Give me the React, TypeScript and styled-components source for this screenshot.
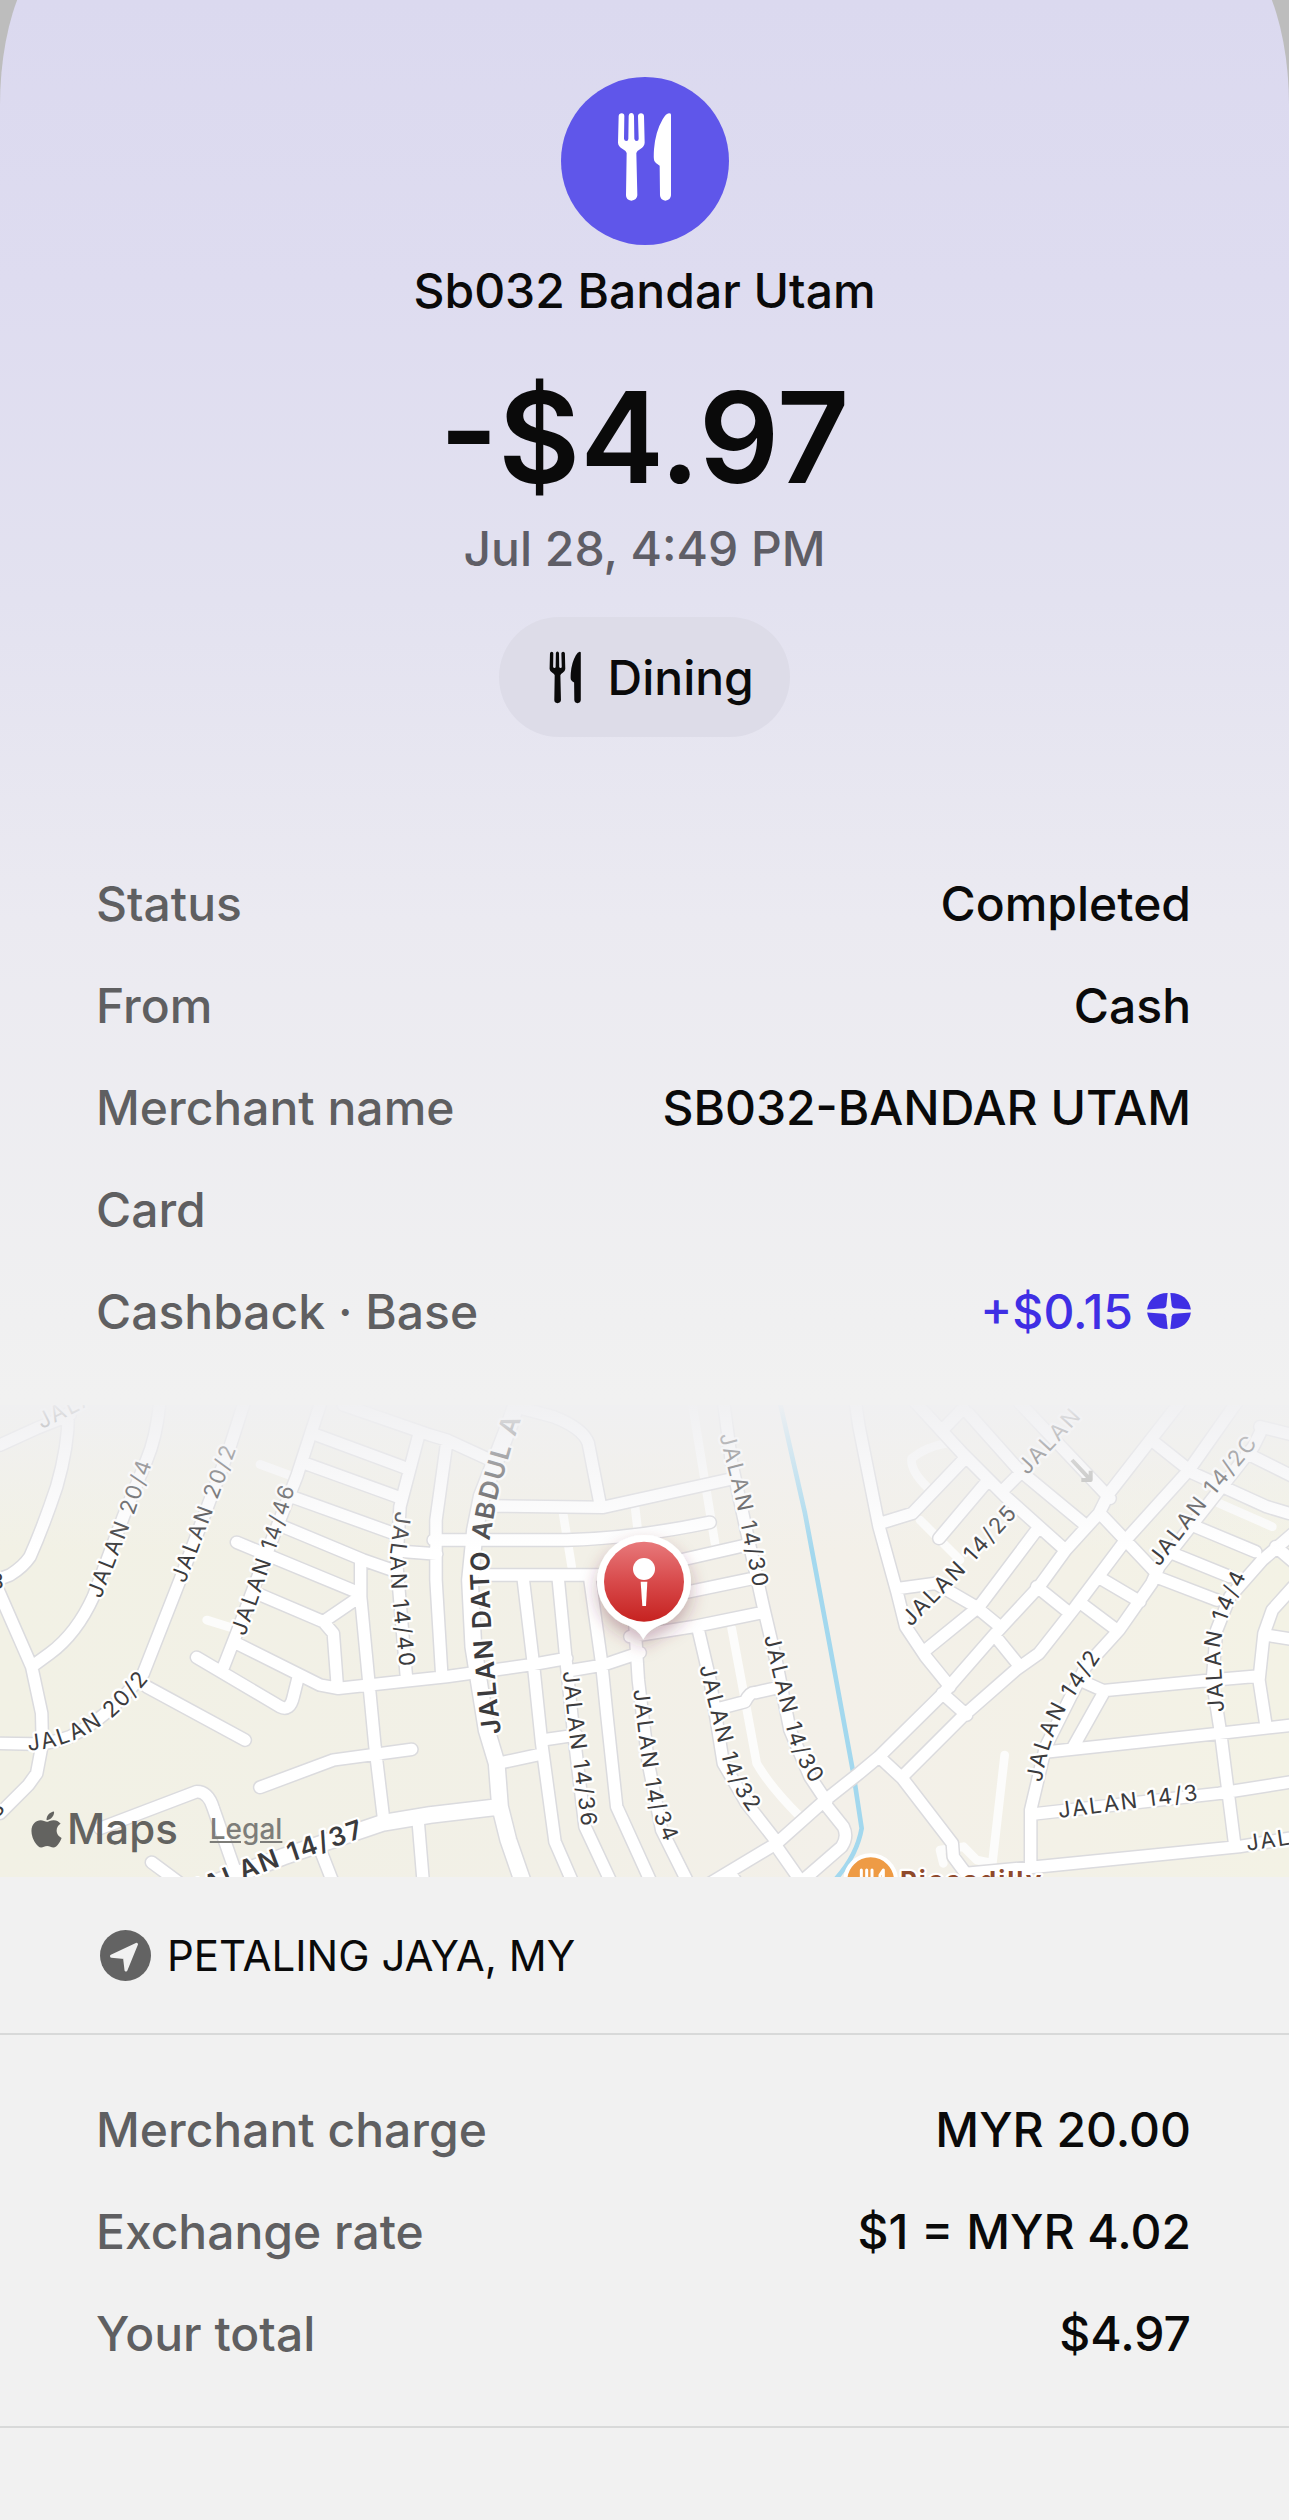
import React from 'react'
import styled, { createGlobalStyle } from 'styled-components'
import { FaApple } from 'react-icons/fa'

const GlobalStyle = createGlobalStyle`
  * {
    box-sizing: border-box;
  }

  body {
    margin: 0;
    background: #bdbdbd;
    font-family: Inter, 'Liberation Sans', sans-serif;
    color: #0a0a0a;
  }
`

const Screen = styled.main`
  background: #bdbdbd;
  overflow: hidden;
`

// the rounded top of the sheet runs off the screen
const Sheet = styled.article`
  min-height: calc(100vh + 60px);
  margin-top: -60px;
  padding-top: 60px;
  border-radius: 75px 75px 0 0 / 165px 165px 0 0;
  background: linear-gradient(180deg, #dbd9ef 60px, #dedcf0 340px, #e3e2f0 660px, #ebeaf1 980px, #f0f0f1 1380px, #f1f1f1 1460px);
`

const Hero = styled.header`
  display: flex;
  flex-direction: column;
  align-items: center;
  padding: 77px 40px 0;
`

const Badge = styled.div`
  display: flex;
  align-items: center;
  justify-content: center;
  width: 168px;
  height: 168px;
  border-radius: 50%;
  background: #5f56ea;
  color: #fff;
  padding-bottom: 8px;
`

const Merchant = styled.h1`
  margin: 16px 0 0;
  font-size: 48px;
  line-height: 60px;
  font-weight: 500;
`

const Amount = styled.p`
  margin: 38px 0 0;
  font-size: 126px;
  line-height: 156px;
  font-weight: 600;
`

const DateText = styled.time`
  margin-top: 4px;
  font-size: 48px;
  line-height: 60px;
  font-weight: 500;
  color: #5f5e66;
`

const CategoryButton = styled.button`
  display: flex;
  align-items: center;
  gap: 26px;
  height: 120px;
  margin-top: 38px;
  padding: 0 36px 0 50px;
  border: 0;
  border-radius: 60px;
  background: #dddce8;
  color: inherit;
  font-family: inherit;
  font-size: 48px;
  font-weight: 500;
`

const Details = styled.dl`
  margin: 0;
  padding: 115px 98px 43px 96px;
`

const Totals = styled(Details)`
  padding: 43px 98px 42px 96px;
  border-top: 2px solid #d8d9d9;
  border-bottom: 2px solid #d8d9d9;
`

const Row = styled.div`
  display: flex;
  align-items: center;
  justify-content: space-between;
  height: 102px;
  font-size: 48px;
  font-weight: 500;
`

const Label = styled.dt`
  color: #5f5f61;
`

const Value = styled.dd<{ $accent?: boolean }>`
  display: flex;
  align-items: center;
  gap: 14px;
  margin: 0;
  color: ${({ $accent }) => ($accent ? '#3f2fe4' : 'inherit')};
`

const MapFrame = styled.section`
  position: relative;
  height: 472px;
  overflow: hidden;
  background: #f2f1e6;
`

const MapSvg = styled.svg`
  display: block;
  width: 100%;
  height: 100%;

  .casing {
    stroke: #dbdbde;
  }

  .road {
    stroke: #fff;
  }

  text {
    font-size: 66px;
    fill: #3b3b3d;
    stroke: #fff;
    stroke-width: 14px;
    stroke-linejoin: round;
    paint-order: stroke;
    letter-spacing: 6px;
  }

  .major {
    font-size: 78px;
    font-weight: 600;
  }

  .place {
    font-size: 78px;
    font-weight: 700;
    fill: #8f4a2c;
  }
`

const MapCredit = styled.div`
  position: absolute;
  left: 26px;
  bottom: 22px;
  display: flex;
  align-items: center;
  color: #636360;
  font-size: 42px;
  line-height: 52px;
  font-weight: 500;
`

const LegalLink = styled.a`
  margin-left: 32px;
  font-size: 28px;
  color: #7d7d79;
`

const Address = styled.address`
  display: flex;
  align-items: center;
  gap: 16px;
  height: 156px;
  padding: 0 98px 0 100px;
  font-style: normal;
  font-size: 42px;
`

const CutleryIcon = ({ height }: { height: number }) => (
  <svg height={height} viewBox="0 0 165 270" fill="currentColor" aria-hidden="true">
    <path d="M5 12Q6 4 14 4Q22 4 22 12L21 80Q22 87 28 87Q34 87 34 80L35 12Q36 3 43 3Q50 3 51 12L52 80Q53 87 59 87Q65 87 65 80L63 12Q64 4 72 4Q80 4 81 12L83 92Q82 104 70 111Q59 117 58 123L61 250Q60 265 43 266Q27 265 27 250L29 123Q28 117 17 111Q4 104 3 92Z" />
    <path d="M162 8Q162 4 156 4Q147 4 137 22Q115 60 111 112Q109 140 112 147Q116 155 128 161L129 250Q130 265 145 266Q161 265 162 250Z" />
  </svg>
)

const CoinIcon = () => (
  <svg width="44" height="36" viewBox="0 0 130 107" fill="currentColor" aria-hidden="true">
    <path id="coin-quarter" d="M0 49C4 20 26 0 61 0L57 38Q56 44 50 45Z" />
    <use href="#coin-quarter" transform="translate(130 0) scale(-1 1)" />
    <use href="#coin-quarter" transform="translate(0 107) scale(1 -1)" />
    <use href="#coin-quarter" transform="translate(130 107) scale(-1 -1)" />
  </svg>
)

const LocationIcon = () => (
  <svg width="51" height="51" viewBox="0 0 51 51" aria-hidden="true">
    <circle cx="25.5" cy="25.5" r="25.5" fill="#636363" />
    <path d="M11.5 26.2L36.5 14.3L26 40L24.5 27.4Z" fill="#f1f1f1" stroke="#f1f1f1" strokeWidth="3" strokeLinejoin="round" />
  </svg>
)

// map units are a third of a pixel
const ROADS = [
  'M0 195L110 145L210 105',
  'M205 100Q205 200 170 320Q130 440 90 530Q70 560 30 585L-10 600',
  'M-10 620L95 860L125 1000L127 1090L110 1180L85 1215L0 1300',
  'M480 60Q470 170 440 240L370 410L280 650Q230 760 150 820L95 860',
  'M735 60L690 200L540 600L430 880Q330 1010 210 1070Q150 1092 100 1092L-10 1090',
  'M440 920L735 1080',
  'M965 60L890 290L800 520L710 760L665 875',
  'M950 165L1220 265',
  'M915 250L1205 355',
  'M880 352L1180 460',
  'M850 440L1090 540L1190 575',
  'M710 487L1080 640',
  'M770 640L970 725L1000 760L1012 920',
  'M590 832L840 980Q870 995 880 950L895 890',
  'M710 790L900 885L960 915L1015 925L1200 905L1340 890L1600 853L1700 835',
  'M1082 550L1082 650L1125 1100L1150 1310',
  'M970 725L1080 650',
  'M780 1222L1000 1140L1235 1108',
  'M1255 170L1200 380L1190 550L1220 900',
  'M1030 75L1290 165L1340 180L1460 235',
  'M1215 515L1310 522',
  'M1340 190L1308 420L1308 600L1325 880',
  'M300 1345L590 1235Q625 1235 640 1285L715 1500',
  'M455 1447L540 1510',
  'M965 1420L1000 1510',
  'M1255 1330L1270 1510',
  'M1565 85L1660 110Q1750 145 1765 190L1800 370',
  'M1480 378L1810 382L2190 298',
  'M1300 480L1700 480Q1900 475 2130 427',
  'M1450 585L1900 585',
  'M2020 545L2240 495',
  'M2020 645L2260 595',
  'M1890 770L2080 740L2290 697',
  'M1570 600L1600 850L1625 1090L1665 1385L1715 1500',
  'M1675 600L1700 860L1720 1050L1755 1340L1830 1500',
  'M1770 600L1805 850L1820 1000L1850 1280L1950 1500',
  'M1905 740L1915 900L1945 1150L1985 1350L2060 1500',
  'M1710 872L1810 855L1920 818',
  'M2095 750L2130 900L2170 1150L2240 1270L2330 1385',
  'M2170 60L2195 250L2250 500L2290 680L2330 850L2370 1050L2430 1190L2480 1265',
  'M1640 1078L1730 1065',
  'M1495 1150L1625 1122',
  'M2160 985L2235 965Q2250 935 2265 938L2345 920',
  'M2470 1265L2530 1340Q2545 1370 2525 1400L2410 1500',
  'M2330 1400L2400 1500',
  'M2190 1480L2220 1520',
  'M2130 1510L2330 1390L2470 1265L2577 1180L2637 1130L2830 940L2987 760L3117 620L3197 510L3297 400L3327 340L3545 60',
  'M2565 60L2577 140L2637 440L2692 640L2717 740L2777 830L2850 920',
  'M2640 430L2737 400L2890 240',
  'M2740 60L2887 220L3017 350L3190 505',
  'M2827 150L2890 85',
  'M2905 100L3057 270L3250 430',
  'M3060 70L3330 355',
  'M2965 300L2817 475',
  'M3070 270L3010 330',
  'M3110 450L2937 680L2777 810',
  'M2697 625L2807 610L2927 680L3000 740',
  'M3110 620L3210 700',
  'M2987 770L3060 860',
  'M2827 940L2900 1005',
  'M3715 60L3567 270L3377 480L3227 680L3117 820L3047 870L2887 1010L2707 1190',
  'M3467 190L3580 280L3800 380L3867 400',
  'M3300 400L3470 580',
  'M3310 600L3420 665',
  'M3250 675L3350 750',
  'M3780 160L3760 200L3477 560L3455 610L3357 750L3257 860L3137 1100L3092 1290L3092 1460',
  'M2637 1130L2707 1195L2857 1390L2860 1430L2897 1480L3137 1458L3717 1400L3867 1375',
  'M3100 1302L3657 1240L3880 1205',
  'M3150 1115L3657 1060L3880 1035',
  'M3250 905L3310 932L3637 900L3777 888',
  'M3310 940L3220 1100',
  'M3880 460L3787 540L3690 650L3650 750L3637 900L3662 1060L3705 1400',
  'M3880 620L3817 690L3792 760L3777 900L3797 1030',
  'M3795 765L3880 778',
  'M3827 500L3880 545',
  'M3467 590L3650 660',
  'M3517 520L3690 590',
  'M3587 440L3767 515',
  'M3740 220L3880 290',
  'M3780 140L3880 165',
]

const MAJOR_ROADS = [
  'M640 1510L850 1430L1150 1328L1290 1305L1500 1280',
  'M1550 70L1530 130L1445 350L1425 450L1410 600L1420 800L1460 1050L1490 1150L1500 1280L1525 1380L1570 1510',
]

const LANES = [
  'M780 253L880 290',
  'M620 720L710 748',
  'M1690 405L1715 560',
  'M1905 380L1912 440',
  'M2075 60L2145 490',
  'M2195 745L2235 960L2270 1150Q2310 1220 2400 1310',
  'M3657 370L3817 440',
  'M3014 1125L2977 1450L2930 1440L2890 1400L2820 1410L2830 1450',
  'M2840 190Q2780 200 2735 235Q2730 270 2780 320',
  'M2760 420L2880 540',
]

const STREET_NAMES = [
  { name: 'JALAN', d: 'M125 148L400 10' },
  { name: 'JALAN 20/4', d: 'M302 658L400 410L480 180' },
  { name: 'JALAN 20/2', d: 'M555 612L750 100' },
  { name: 'JALAN 14/46', d: 'M735 770L830 500L930 180' },
  { name: 'JALAN 14/40', d: 'M1187 392L1170 520L1175 640L1210 960' },
  { name: 'JALAN 20/2', d: 'M85 1112Q230 1100 340 1010Q410 950 500 830' },
  { name: 'JALAN 14/36', d: 'M1688 875L1710 1080L1730 1220L1760 1450' },
  { name: 'JALAN 14/34', d: 'M1900 930L1920 1100L1945 1270L2020 1450' },
  { name: 'JALAN 14/32', d: 'M2098 860L2140 1030L2170 1150Q2200 1250 2300 1360' },
  { name: 'JALAN 14/30', d: 'M2158 165L2200 330L2230 470L2275 700' },
  { name: 'JALAN 14/30', d: 'M2292 770L2335 950L2365 1070Q2390 1160 2480 1270' },
  { name: 'JALAN 14/25', d: 'M2732 742L2892 580L3127 320' },
  { name: 'JALAN', d: 'M3082 287L3340 10' },
  { name: 'JALAN 14/2C', d: 'M3477 562L3617 380L3857 90' },
  { name: 'JALAN 14/2', d: 'M3125 1208Q3145 1080 3202 980L3357 750' },
  { name: 'JALAN 14/4', d: 'M3672 995L3660 800Q3670 710 3780 510' },
  { name: 'JALAN 14/3', d: 'M3177 1314L3700 1246' },
  { name: 'JALAN', d: 'M3742 1412L4100 1360' },
]

const MAJOR_NAMES = [
  { name: 'JALAN DATO ABDUL A', d: 'M1503 1060L1490 950L1475 770L1467 600L1470 470L1495 340L1535 200L1610 -20' },
  { name: 'JALAN 14/37', d: 'M578 1562L745 1494L880 1443L1300 1300' },
]

const StreetMap = () => (
  <MapSvg viewBox="0 75 3867 1416" preserveAspectRatio="xMidYMid slice" fill="none" strokeLinecap="round" strokeLinejoin="round" role="img" aria-label="Map of Petaling Jaya">
    <defs>
      <linearGradient id="land">
        <stop offset="0" stopColor="#f2f1e5" />
        <stop offset="0.45" stopColor="#f2f0e7" />
        <stop offset="0.65" stopColor="#f3f0e9" />
        <stop offset="1" stopColor="#f3f2e5" />
      </linearGradient>
      <linearGradient id="fade" x1="0" y1="0" x2="0" y2="1">
        <stop offset="0" stopColor="#f0f0f2" stopOpacity="0.96" />
        <stop offset="0.3" stopColor="#f0f0f2" stopOpacity="0.65" />
        <stop offset="1" stopColor="#f0f0f2" stopOpacity="0" />
      </linearGradient>
      <linearGradient id="pin" x1="0" y1="0" x2="0" y2="1">
        <stop offset="0" stopColor="#e8797b" />
        <stop offset="0.5" stopColor="#d84a4b" />
        <stop offset="1" stopColor="#c62220" />
      </linearGradient>
      <filter id="pin-shadow" x="-50%" y="-50%" width="200%" height="200%">
        <feDropShadow dx="0" dy="26" stdDeviation="26" floodColor="#6b2f3a" floodOpacity="0.35" />
      </filter>
      {STREET_NAMES.map((s, i) => (
        <path key={s.d} id={`street-${i}`} d={s.d} />
      ))}
      {MAJOR_NAMES.map((s, i) => (
        <path key={s.d} id={`major-${i}`} d={s.d} />
      ))}
    </defs>
    <rect y="75" width="3867" height="1416" fill="url(#land)" />
    <path d="M2338 60L2415 400L2490 800L2560 1180L2585 1345Q2570 1430 2500 1505" stroke="#a3d8ee" strokeWidth="14" />
    <path d={LANES.join('')} stroke="#fcfcfb" strokeWidth="26" />
    <path className="casing" d={ROADS.join('')} strokeWidth="43" />
    <path className="casing" d={MAJOR_ROADS.join('')} strokeWidth="56" />
    <path className="road" d={ROADS.join('')} strokeWidth="34" />
    <path className="road" d={MAJOR_ROADS.join('')} strokeWidth="47" />
    {STREET_NAMES.map((s, i) => (
      <text key={s.d}>
        <textPath href={`#street-${i}`}>{s.name}</textPath>
      </text>
    ))}
    {MAJOR_NAMES.map((s, i) => (
      <text key={s.d} className="major">
        <textPath href={`#major-${i}`}>{s.name}</textPath>
      </text>
    ))}
    <text x="-12" y="1318" transform="rotate(-42 -12 1318)">8</text>
    <text x="-29" y="628">8</text>
    <path d="M3216 240L3268 296M3272 272L3272 300L3244 300" stroke="#b0b0ac" strokeWidth="12" strokeLinecap="butt" />
    <rect y="75" width="3867" height="440" fill="url(#fade)" />
    <circle cx="2612" cy="1502" r="76" fill="#ee9b45" stroke="#fff" strokeWidth="12" />
    <path d="M2584 1470V1510M2600 1470V1510M2616 1470V1510M2640 1510V1485L2650 1470V1510" stroke="#fff" strokeWidth="9" />
    <text className="place" x="2700" y="1531">Piccadilly</text>
    <g filter="url(#pin-shadow)">
      <path d="M1932 465A140 140 0 0 1 2000 728Q1945 745 1930 778Q1915 745 1864 728A140 140 0 0 1 1932 465Z" fill="#fff" />
    </g>
    <circle cx="1932" cy="605" r="120" fill="url(#pin)" />
    <circle cx="1932" cy="567" r="33" fill="#fff" />
    <path d="M1922 605H1942L1938 678H1927Z" fill="#fff" />
  </MapSvg>
)

const TRANSACTION = [
  { label: 'Status', value: 'Completed' },
  { label: 'From', value: 'Cash' },
  { label: 'Merchant name', value: 'SB032-BANDAR UTAM' },
  { label: 'Card', value: '' },
]

const TOTALS = [
  { label: 'Merchant charge', value: 'MYR 20.00' },
  { label: 'Exchange rate', value: '$1 = MYR 4.02' },
  { label: 'Your total', value: '$4.97' },
]

const App = () => (
  <>
    <GlobalStyle />
    <Screen>
      <Sheet>
        <Hero>
          <Badge>
            <CutleryIcon height={90} />
          </Badge>
          <Merchant>Sb032 Bandar Utam</Merchant>
          <Amount>-$4.97</Amount>
          <DateText>Jul 28, 4:49 PM</DateText>
          <CategoryButton type="button">
            <CutleryIcon height={53} />
            Dining
          </CategoryButton>
        </Hero>

        <Details>
          {TRANSACTION.map((row) => (
            <Row key={row.label}>
              <Label>{row.label}</Label>
              <Value>{row.value}</Value>
            </Row>
          ))}
          <Row>
            <Label>Cashback · Base</Label>
            <Value $accent>
              +$0.15
              <CoinIcon />
            </Value>
          </Row>
        </Details>

        <MapFrame>
          <StreetMap />
          <MapCredit>
            <FaApple size={41} />
            Maps
            <LegalLink href="#legal">Legal</LegalLink>
          </MapCredit>
        </MapFrame>

        <Address>
          <LocationIcon />
          PETALING JAYA, MY
        </Address>

        <Totals>
          {TOTALS.map((row) => (
            <Row key={row.label}>
              <Label>{row.label}</Label>
              <Value>{row.value}</Value>
            </Row>
          ))}
        </Totals>
      </Sheet>
    </Screen>
  </>
)

export default App
